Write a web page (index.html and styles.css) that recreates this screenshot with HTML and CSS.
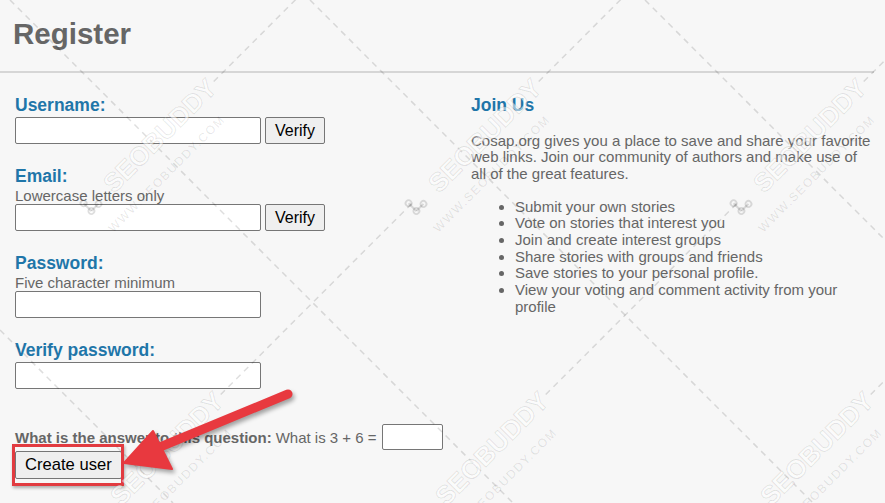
FILE: index.html
```html
<!DOCTYPE html>
<html lang="en">
<head>
<meta charset="utf-8">
<title>Register</title>
<link rel="stylesheet" href="styles.css">
</head>
<body>
<div class="page">
  <h1 class="title">Register</h1>
  <div class="rule"></div>
  <main class="cols">
    <form class="reg">
      <div class="group first">
        <label class="lbl">Username:</label>
        <div class="row">
          <input class="field" type="text">
          <button class="btn" type="button">Verify</button>
        </div>
      </div>
      <div class="group">
        <label class="lbl">Email:</label>
        <div class="hint">Lowercase letters only</div>
        <div class="row tight">
          <input class="field" type="text">
          <button class="btn" type="button">Verify</button>
        </div>
      </div>
      <div class="group">
        <label class="lbl">Password:</label>
        <div class="hint">Five character minimum</div>
        <div class="row tight">
          <input class="field" type="password">
        </div>
      </div>
      <div class="group">
        <label class="lbl">Verify password:</label>
        <div class="row">
          <input class="field" type="password">
        </div>
      </div>
      <div class="question">
        <b class="q-strong">What is the answer to this question:</b>
        <span class="q-text">What is 3 + 6 =</span>
        <input class="answer" type="text">
      </div>
      <div class="submit">
        <button class="btn create" type="button">Create user</button>
        <span class="highlight"></span>
      </div>
    </form>
    <aside class="join">
      <h2 class="lbl">Join Us</h2>
      <p class="intro">Cosap.org gives you a place to save and share your favorite web links. Join our community of authors and make use of all of the great features.</p>
      <ul class="features">
        <li>Submit your own stories</li>
        <li>Vote on stories that interest you</li>
        <li>Join and create interest groups</li>
        <li>Share stories with groups and friends</li>
        <li>Save stories to your personal profile.</li>
        <li>View your voting and comment activity from your profile</li>
      </ul>
    </aside>
  </main>
  <svg class="watermark" width="885" height="503" viewBox="0 0 885 503" aria-hidden="true">
    <defs>
      <g id="wm">
        <line x1="150" y1="-9" x2="425" y2="-9" class="wm-dash"/>
        <g class="wm-logo" transform="translate(-24,-9)">
          <line x1="-4" y1="-6" x2="-4" y2="5"/>
          <line x1="-4" y1="5" x2="6" y2="5"/>
          <circle cx="-4" cy="-6" r="3"/>
          <circle cx="-4" cy="5" r="3"/>
          <circle cx="6" cy="5" r="3"/>
        </g>
        <text class="wm-big" x="0" y="0">SEOBUDDY</text>
        <text class="wm-small" x="-28" y="27">WWW.SEOBUDDY.COM</text>
      </g>
    </defs>
    <g class="wm-lines">
      <line x1="310" y1="0" x2="813" y2="503"/>
      <line x1="10" y1="0" x2="513" y2="503"/>
      <line x1="0" y1="330" x2="173" y2="503"/>
      <line x1="645" y1="0" x2="885" y2="240"/>
    </g>
    <use href="#wm" transform="translate(114,194) rotate(-45)"/>
    <use href="#wm" transform="translate(439,194) rotate(-45)"/>
    <use href="#wm" transform="translate(764,194) rotate(-45)"/>
    <use href="#wm" transform="translate(121,507) rotate(-45)"/>
    <use href="#wm" transform="translate(446,507) rotate(-45)"/>
    <use href="#wm" transform="translate(771,507) rotate(-45)"/>
    <use href="#wm" transform="translate(-211,194) rotate(-45)"/>
  </svg>
  <svg class="arrow" width="885" height="503" viewBox="0 0 885 503" aria-hidden="true">
    <line x1="288" y1="394" x2="160" y2="447" stroke="#e8393f" stroke-width="9" stroke-linecap="round"/>
    <polygon points="124,463 153,431 172,469" fill="#e8393f" stroke="#e8393f" stroke-width="2" stroke-linejoin="round"/>
  </svg>
</div>
</body>
</html>
```

FILE: styles.css
```css
html, body {
  margin: 0;
  padding: 0;
  background: #f7f7f7;
}

body {
  font-family: "Liberation Sans", Arial, sans-serif;
  color: #666;
}

.page {
  position: relative;
  width: 885px;
  height: 503px;
  overflow: hidden;
}

.title {
  margin: 0;
  padding: 17px 0 0 13px;
  font-size: 29.5px;
  line-height: 34px;
  font-weight: bold;
  color: #666;
}

.rule {
  margin-top: 20px;
  width: 874px;
  height: 2px;
  background: #d6d6d6;
}

.cols {
  display: flex;
  padding-left: 15px;
}

.reg {
  width: 456px;
  display: flex;
  flex-direction: column;
  align-items: flex-start;
}

.group {
  margin-top: 22px;
  display: flex;
  flex-direction: column;
  align-items: flex-start;
}

.lbl {
  display: block;
  margin: 0;
  font-size: 17.5px;
  line-height: 21px;
  font-weight: bold;
  color: #1f76a9;
}

.hint {
  font-size: 15px;
  line-height: 17px;
  color: #666;
}

.row {
  display: flex;
  gap: 4px;
  margin-top: 1px;
}

.row.tight {
  margin-top: 0;
}

.field {
  box-sizing: border-box;
  width: 246px;
  height: 27px;
  margin: 0;
  border: 1px solid #767676;
  border-radius: 2px;
  background: #fff;
  font: 15px "Liberation Sans", Arial, sans-serif;
  padding: 1px 3px;
}

.btn {
  box-sizing: border-box;
  height: 27px;
  margin: 0;
  padding: 0 9px;
  border: 1px solid #767676;
  border-radius: 2px;
  background: #efefef;
  color: #000;
  font: 16px "Liberation Sans", Arial, sans-serif;
  line-height: 25px;
}

.question {
  margin-top: 35px;
  display: flex;
  align-items: center;
  height: 26px;
  font-size: 15px;
  color: #666;
}

.q-strong {
  font-weight: bold;
  margin-right: 4px;
}

.q-text {
  margin-right: 5px;
}

.answer {
  box-sizing: border-box;
  width: 61px;
  height: 26px;
  margin: 0;
  border: 1px solid #767676;
  border-radius: 2px;
  background: #fff;
}

.submit {
  position: relative;
  margin-top: 1px;
}

.btn.create {
  height: 28px;
  padding: 0 9px;
  font-size: 16.6px;
  line-height: 26px;
}

.highlight {
  position: absolute;
  left: -3px;
  top: -7px;
  width: 112px;
  height: 42px;
  box-sizing: border-box;
  border: 3px solid #e23b40;
  box-shadow: 1px 2px 3px rgba(0, 0, 0, 0.3);
}

.join {
  width: 404px;
}

.join .lbl {
  margin-top: 22px;
}

.intro {
  margin: 16.5px 0 0;
  font-size: 15px;
  line-height: 16.67px;
  color: #666;
}

.features {
  margin: 16px 0 0;
  padding-left: 44px;
  font-size: 15px;
  line-height: 16.67px;
  color: #666;
}

.watermark {
  position: absolute;
  left: 0;
  top: 0;
  pointer-events: none;
}

.wm-lines line,
.wm-dash {
  stroke: rgba(0, 0, 0, 0.13);
  stroke-width: 1.5;
  stroke-dasharray: 6 5;
}

.wm-logo line {
  stroke: rgba(0, 0, 0, 0.13);
  stroke-width: 2;
}

.wm-logo circle {
  fill: none;
  stroke: rgba(0, 0, 0, 0.13);
  stroke-width: 1.8;
}

.wm-big {
  font-family: "Liberation Sans", Arial, sans-serif;
  font-size: 26px;
  font-weight: bold;
  fill: rgba(255, 255, 255, 0.55);
  stroke: rgba(0, 0, 0, 0.1);
  stroke-width: 1;
}

.wm-small {
  font-family: "Liberation Sans", Arial, sans-serif;
  font-size: 12px;
  letter-spacing: 1.6px;
  fill: rgba(0, 0, 0, 0.1);
}

.arrow {
  position: absolute;
  left: 0;
  top: 0;
  pointer-events: none;
  filter: drop-shadow(2px 3px 2px rgba(0, 0, 0, 0.35));
}
```
